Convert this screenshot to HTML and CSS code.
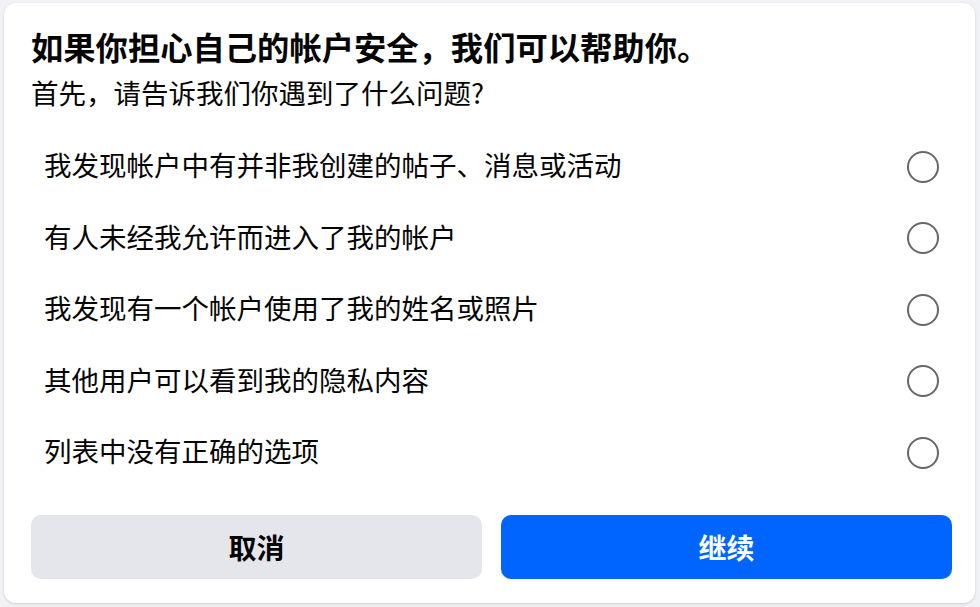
FILE: index.html
```html
<!DOCTYPE html>
<html lang="zh-CN">
  <head>
    <meta charset="UTF-8" />
    <meta name="viewport" content="width=device-width, initial-scale=1.0" />
    <title>帐户安全</title>
    <link rel="stylesheet" href="styles.css">
  </head>
  <body>
    <main class="card">
      <!-- Header -->
      <header>
        <h1>如果你担心自己的帐户安全，我们可以帮助你。</h1>
        <p class="sub">首先，请告诉我们你遇到了什么问题?</p>
      </header>

      <!-- Options -->
      <form class="options">
        <label class="option">
          <span>我发现帐户中有并非我创建的帖子、消息或活动</span>
          <input type="radio" name="issue" value="posts" />
        </label>
        <label class="option">
          <span>有人未经我允许而进入了我的帐户</span>
          <input type="radio" name="issue" value="access" />
        </label>
        <label class="option">
          <span>我发现有一个帐户使用了我的姓名或照片</span>
          <input type="radio" name="issue" value="impersonation" />
        </label>
        <label class="option">
          <span>其他用户可以看到我的隐私内容</span>
          <input type="radio" name="issue" value="privacy" />
        </label>
        <label class="option">
          <span>列表中没有正确的选项</span>
          <input type="radio" name="issue" value="other" />
        </label>
      </form>

      <!-- Actions -->
      <footer class="actions">
        <button type="button" class="btn btn-cancel">取消</button>
        <button type="button" class="btn btn-primary">继续</button>
      </footer>
    </main>
  </body>
</html>
```

FILE: styles.css
```css
:root {
  --bg-page: #f0f2f5;
  --bg-card: #ffffff;
  --text-primary: #050505;
  --radio-border: #65676b;
  --btn-grey: #e4e6eb;
  --btn-blue: #0064ff;
}

* {
  margin: 0;
  padding: 0;
  box-sizing: border-box;
  font-family: "Noto Sans CJK SC", "Noto Sans", sans-serif;
}

body {
  background-color: var(--bg-page);
  color: var(--text-primary);
  width: 100%;
  height: 100vh;
  overflow: hidden;
}

.card {
  margin: 3px 5px 0 4px;
  height: 600px;
  background-color: var(--bg-card);
  border-radius: 12px;
  box-shadow: 0 1px 3px rgba(0, 0, 0, 0.15);
  padding: 23px 23px 24px 27px;
  display: flex;
  flex-direction: column;
}

header h1 {
  font-size: 32.3px;
  line-height: 40px;
  font-weight: 700;
}

header .sub {
  margin-top: 8px;
  font-size: 27.5px;
  line-height: 36px;
}

.options {
  margin-top: 21px;
  display: flex;
  flex-direction: column;
}

.option {
  height: 71.5px;
  display: flex;
  align-items: center;
  justify-content: space-between;
  padding: 0 13px 0 13px;
  font-size: 27.5px;
  cursor: pointer;
}

.option span {
  margin-bottom: 5px;
}

.option input {
  appearance: none;
  width: 32px;
  height: 32px;
  border: 2.5px solid var(--radio-border);
  border-radius: 50%;
  flex-shrink: 0;
  cursor: pointer;
}

.option input:checked {
  border: 9px solid var(--btn-blue);
}

.actions {
  margin-top: 26px;
  display: grid;
  grid-template-columns: 1fr 1fr;
  gap: 19px;
}

.btn {
  height: 64px;
  border: none;
  border-radius: 10px;
  font-size: 28px;
  font-weight: 700;
  cursor: pointer;
}

.btn-cancel {
  background-color: var(--btn-grey);
  color: var(--text-primary);
}

.btn-primary {
  background-color: var(--btn-blue);
  color: #ffffff;
}
```
